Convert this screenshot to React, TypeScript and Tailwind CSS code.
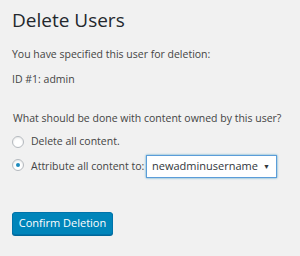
export default function App() {
  return (
    <div
      className="w-[300px] h-[256px] bg-[#f1f1f1] text-[#444] px-3 pt-[8px]"
      style={{ fontFamily: '"Open Sans", sans-serif' }}
    >
      <h1 className="text-[19px] leading-[24px] text-[#23282d] mb-[14px]">Delete Users</h1>
      <p className="text-[10.5px] leading-[16px]">You have specified this user for deletion:</p>
      <p className="text-[10.5px] leading-[16px] mt-[9px]">ID #1: admin</p>

      <fieldset className="mt-[23px]">
        <p className="text-[10.5px] leading-[16px] pl-[1px] whitespace-nowrap">
          What should be done with content owned by this user?
        </p>
        <ul className="mt-[8px] flex flex-col gap-[5px]">
          <li className="flex items-center h-[16px]">
            <span className="w-[12px] h-[12px] rounded-full border border-[#b4b9be] bg-white shadow-[inset_0_1px_2px_rgba(0,0,0,0.1)]" />
            <span className="text-[10.5px] ml-[7px] whitespace-nowrap">Delete all content.</span>
          </li>
          <li className="flex items-center h-[23px]">
            <span className="w-[12px] h-[12px] -translate-y-[2px] rounded-full border border-[#b4b9be] bg-white flex items-center justify-center shadow-[inset_0_1px_2px_rgba(0,0,0,0.1)]">
              <span className="w-[4px] h-[4px] rounded-full bg-[#1e8cbe]" />
            </span>
            <span className="text-[10.5px] ml-[7px] whitespace-nowrap">Attribute all content to:</span>
            <span className="ml-auto mr-[11px] w-[131px] h-[23px] shrink-0 border border-[#5b9dd9] bg-white shadow-[0_0_2px_rgba(30,140,190,0.8)] flex items-center justify-between pl-[5px] pr-[6px] text-[11px] text-[#32373c]">
              <span className="whitespace-nowrap">newadminusername</span>
              <span className="text-[7px] leading-none">▼</span>
            </span>
          </li>
        </ul>
      </fieldset>

      <button className="mt-[34px] w-[101px] h-[23px] rounded-[3px] bg-[#0085ba] border border-[#0073aa] text-[11px] text-white shadow-[0_1px_0_#006799]">
        Confirm Deletion
      </button>
    </div>
  )
}
